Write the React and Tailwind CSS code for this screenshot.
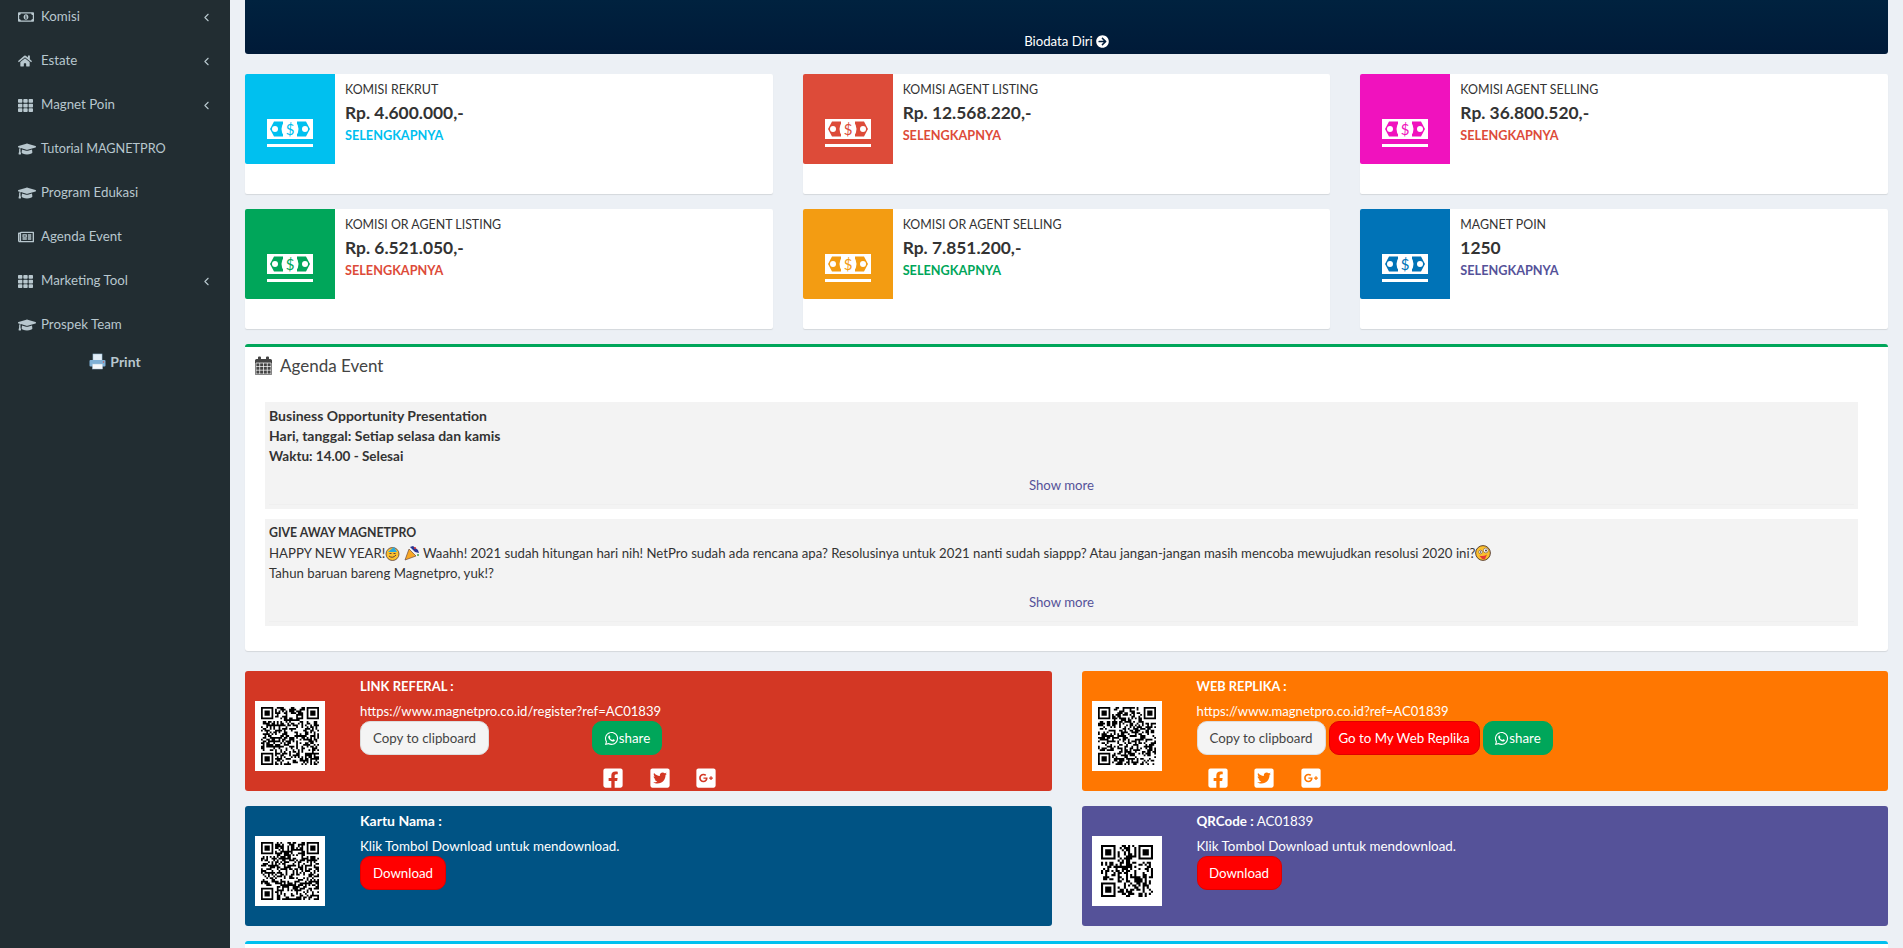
import React from "react";
import { ChevronLeft } from "lucide-react";
import { FaRegMoneyBillAlt, FaHome, FaTh, FaGraduationCap, FaRegNewspaper, FaArrowCircleRight, FaWhatsapp, FaFacebookSquare, FaTwitterSquare, FaGooglePlusSquare } from "react-icons/fa";

function qrPath(n, seed) {
  let s = seed;
  const rnd = () => { s = (s * 1664525 + 1013904223) % 4294967296; return (s >>> 16) & 1; };
  const inFinder = (x, y) => (x < 8 && y < 8) || (x >= n - 8 && y < 8) || (x < 8 && y >= n - 8);
  let d = "";
  const rect = (x, y, w, h) => { d += `M${x} ${y}h${w}v${h}h${-w}z`; };
  for (let y = 0; y < n; y++) for (let x = 0; x < n; x++) { const b = rnd(); if (!inFinder(x, y) && b) rect(x, y, 1, 1); }
  [[0, 0], [n - 7, 0], [0, n - 7]].forEach(([x, y]) => {
    rect(x, y, 7, 1); rect(x, y + 6, 7, 1); rect(x, y + 1, 1, 5); rect(x + 6, y + 1, 1, 5); rect(x + 2, y + 2, 3, 3);
  });
  return d;
}

function QR({ n = 33, seed = 7, inner = 58 }) {
  return (
    <div className="flex h-[70px] w-[70px] items-center justify-center bg-white">
      <svg width={inner} height={inner} viewBox={`0 0 ${n} ${n}`}><path d={qrPath(n, seed)} fill="#000" /></svg>
    </div>
  );
}

function Cash({ color }) {
  return (
    <svg width="46" height="28" viewBox="0 0 46 28">
      <rect x="0" y="0" width="46" height="20" fill="#fff" />
      <rect x="0" y="25" width="46" height="3" fill="#fff" />
      <path d="M3 10 L7 2.5 H16 V17.5 H7 Z" fill={color} />
      <path d="M43 10 L39 2.5 H30 V17.5 H39 Z" fill={color} />
      <ellipse cx="23" cy="10" rx="8.5" ry="9.5" fill="#fff" />
      <circle cx="8" cy="10" r="3" fill="#fff" />
      <circle cx="38" cy="10" r="3" fill="#fff" />
      <text x="23" y="15.5" textAnchor="middle" fontSize="15" fontFamily="Lato, sans-serif" fill={color}>$</text>
    </svg>
  );
}

const items = [
  [FaRegMoneyBillAlt, "Komisi", true, 16],
  [FaHome, "Estate", true, 14],
  [FaTh, "Magnet Poin", true, 15],
  [FaGraduationCap, "Tutorial MAGNETPRO", false, 18],
  [FaGraduationCap, "Program Edukasi", false, 18],
  [FaRegNewspaper, "Agenda Event", false, 16],
  [FaTh, "Marketing Tool", true, 15],
  [FaGraduationCap, "Prospek Team", false, 18],
];

const cards = [
  ["#00c0ef", "KOMISI REKRUT", "Rp. 4.600.000,-", "#00c0ef"],
  ["#dd4b39", "KOMISI AGENT LISTING", "Rp. 12.568.220,-", "#dd4b39"],
  ["#f012be", "KOMISI AGENT SELLING", "Rp. 36.800.520,-", "#dd4b39"],
  ["#00a65a", "KOMISI OR AGENT LISTING", "Rp. 6.521.050,-", "#dd4b39"],
  ["#f39c12", "KOMISI OR AGENT SELLING", "Rp. 7.851.200,-", "#00a65a"],
  ["#0073b7", "MAGNET POIN", "1250", "#555299"],
];

function Party() {
  return (
    <svg width="15" height="15" viewBox="0 0 15 15" className="inline-block align-[-3px]">
      <circle cx="7.5" cy="8" r="6.5" fill="#fbc02d" stroke="#5d4037" strokeWidth="0.8" />
      <path d="M3 6 L9 1 L12 6 Z" fill="#29a8e0" />
      <path d="M4 10 Q7.5 13 11 9" fill="none" stroke="#5d4037" />
      <path d="M4.5 7.5h2M8.5 7.5h2" stroke="#5d4037" />
    </svg>
  );
}
function Popper() {
  return (
    <svg width="16" height="16" viewBox="0 0 16 16" className="inline-block align-[-3px]">
      <path d="M1 15 L5 4 L12 11 Z" fill="#f9a825" stroke="#6d4c41" strokeWidth="0.7" />
      <path d="M6 2 L9 1 L14 5 L15 8 L11 7 Z" fill="#283593" />
      <circle cx="11" cy="3" r="1" fill="#e53935" />
      <circle cx="14" cy="10" r="1" fill="#43a047" />
    </svg>
  );
}
function Zany() {
  return (
    <svg width="16" height="16" viewBox="0 0 16 16" className="inline-block align-[-3px]">
      <circle cx="8" cy="8" r="7.4" fill="#fbc02d" stroke="#4e342e" strokeWidth="0.9" />
      <circle cx="5.5" cy="7" r="1.8" fill="#fff" stroke="#4e342e" strokeWidth="0.5" />
      <circle cx="10.8" cy="5.5" r="2.4" fill="#fff" stroke="#4e342e" strokeWidth="0.5" />
      <circle cx="11" cy="5.5" r="0.9" fill="#3e2723" />
      <circle cx="5.5" cy="7" r="0.7" fill="#3e2723" />
      <path d="M4 10.5 Q8 12 12 9.5 L10 14 Q7 15 6 12.5 Z" fill="#e53935" />
    </svg>
  );
}

function CalendarIcon() {
  return (
    <svg width="17" height="19" viewBox="0 0 17 19" className="shrink-0">
      <path fill="#444" d="M1.5 3H3V1.5a1 1 0 0 1 1-1h1a1 1 0 0 1 1 1V3h5V1.5a1 1 0 0 1 1-1h1a1 1 0 0 1 1 1V3h1.5A1.5 1.5 0 0 1 17 4.5v13a1.5 1.5 0 0 1-1.5 1.5h-14A1.5 1.5 0 0 1 0 17.5v-13A1.5 1.5 0 0 1 1.5 3z" />
      <path fill="none" stroke="#fff" strokeWidth="0.7" d="M1 7h15v11H1zM1 10.5h15M1 14.2h15M4.7 7v11M8.5 7v11M12.3 7v11" />
    </svg>
  );
}

function Printer() {
  return (
    <svg width="17" height="17" viewBox="0 0 17 17">
      <rect x="4" y="1" width="9" height="7" fill="#e3eef7" stroke="#9fc2dc" strokeWidth="0.6" />
      <rect x="0.5" y="7" width="16" height="6.5" rx="1" fill="#7fb0d6" />
      <rect x="3.5" y="11" width="10" height="5" fill="#f5f8fb" stroke="#a9c4da" strokeWidth="0.5" />
      <circle cx="14.5" cy="9" r="0.7" fill="#d9534f" />
    </svg>
  );
}

function Btn({ className = "", children }) {
  return <div className={`flex h-[34px] items-center justify-center whitespace-nowrap rounded-[10px] border text-[13.3px] ${className}`}>{children}</div>;
}
function Copy() {
  return <Btn className="w-[129px] border-[#ddd] bg-[#f4f4f4] text-[#444]">Copy to clipboard</Btn>;
}
function Share({ className = "" }) {
  return <Btn className={`w-[70px] border-[#00a65a] bg-[#00a65a] text-white ${className}`}><FaWhatsapp className="text-[15px]" />share</Btn>;
}
function Socials({ className = "" }) {
  return (
    <div className={`mt-[12px] flex gap-[24.5px] text-[22px] text-white ${className}`}>
      <FaFacebookSquare /><FaTwitterSquare /><FaGooglePlusSquare />
    </div>
  );
}

function Promo({ bg, seed, n, inner, children }) {
  return (
    <div className="flex h-[120px] overflow-hidden rounded-[3px] text-white" style={{ background: bg }}>
      <div className="w-[115px] shrink-0 pl-[10px] pt-[30px]"><QR seed={seed} n={n} inner={inner} /></div>
      <div className="min-w-0 flex-1 pt-[5px] text-[13.2px] leading-[20px]">{children}</div>
    </div>
  );
}

function AgendaItem({ children }) {
  return (
    <div className="flex h-[107px] flex-col bg-[#f3f3f3] px-[4px] pt-[4px] text-[13.2px] leading-[20px] text-[#333]">
      <div className="h-[61px] whitespace-nowrap">{children}</div>
      <div className="mt-[8px] text-center text-[#555299]">Show more</div>
      <div className="mt-[9px] border-t border-[#efefef]" />
    </div>
  );
}

export default function App() {
  return (
    <div className="flex h-[948px] overflow-hidden bg-[#ecf0f5] font-['Lato','Liberation_Sans',sans-serif]">
      <aside className="w-[230px] shrink-0 bg-[#222d32] text-[13.3px] text-[#b8c7ce]">
        <nav className="-mt-[5px]">
          {items.map(([Icon, label, chev, size]) => (
            <div key={label} className="flex h-[44px] items-center pl-[18px] pr-[17px]">
              <span className="flex w-[23px] shrink-0 items-center"><Icon style={{ fontSize: size }} /></span>
              <span className={`flex-1 whitespace-nowrap ${label === "Tutorial MAGNETPRO" ? "text-[12.7px]" : ""}`}>{label}</span>
              {chev && <ChevronLeft size={13} strokeWidth={2} />}
            </div>
          ))}
        </nav>
        <div className="mt-[4px] flex items-center justify-center gap-[4px] text-[14px] font-bold">
          <Printer /><span>Print</span>
        </div>
      </aside>

      <main className="min-w-0 flex-1 px-[15px]">
        <div className="flex h-[54px] items-end justify-center rounded-b-[3px] bg-[linear-gradient(#00223f,#001a38)] pb-[3px] text-[13.2px] leading-[20px] text-white">
          <span className="flex items-center gap-[3px]">Biodata Diri <FaArrowCircleRight className="text-[13px]" /></span>
        </div>

        <div className="mt-[20px] grid grid-cols-3 gap-x-[30px] gap-y-[15px]">
          {cards.map(([bg, label, value, link]) => (
            <div key={label} className="flex h-[120px] items-start rounded-[2px] bg-white shadow-[0_1px_1px_rgba(0,0,0,0.1)]">
              <div className="flex h-[90px] w-[90px] shrink-0 items-end justify-center rounded-tl-[2px] rounded-bl-[2px] pb-[17px]" style={{ background: bg }}>
                <Cash color={bg} />
              </div>
              <div className="px-[10px] pb-[5px] pt-[6px] text-[#333]">
                <div className="text-[12.4px] leading-[20px]">{label}</div>
                <div className="text-[17.4px] font-bold leading-[25px]">{value}</div>
                <div className="text-[12.7px] font-bold leading-[20px]" style={{ color: link }}>SELENGKAPNYA</div>
              </div>
            </div>
          ))}
        </div>

        <section className="mt-[15px] h-[307px] rounded-[3px] border-t-[3px] border-[#00a65a] bg-white shadow-[0_1px_1px_rgba(0,0,0,0.1)]">
          <div className="flex h-[37px] items-center gap-[8px] pl-[10px] text-[17px] text-[#444]">
            <CalendarIcon />Agenda Event
          </div>
          <div className="mt-[18px] flex flex-col gap-[10px] pl-[20px] pr-[30px]">
            <AgendaItem>
              <div className="text-[14px] font-bold">Business Opportunity Presentation</div>
              <div className="text-[14px] font-bold">Hari, tanggal: Setiap selasa dan kamis</div>
              <div className="text-[13.5px] font-bold">Waktu: 14.00 - Selesai</div>
            </AgendaItem>
            <AgendaItem>
              <div className="text-[12.3px] font-bold">GIVE AWAY MAGNETPRO</div>
              <div>HAPPY NEW YEAR!<Party /> <Popper /> Waahh! 2021 sudah hitungan hari nih! NetPro sudah ada rencana apa? Resolusinya untuk 2021 nanti sudah siappp? Atau jangan-jangan masih mencoba mewujudkan resolusi 2020 ini?<Zany /></div>
              <div>Tahun baruan bareng Magnetpro, yuk!?</div>
            </AgendaItem>
          </div>
        </section>

        <div className="mt-[20px] grid grid-cols-2 gap-x-[30px] gap-y-[15px]">
          <Promo bg="#d33724" seed={11} n={33}>
            <div className="text-[13px] font-bold">LINK REFERAL :</div>
            <div className="mt-[5px] text-[13.1px]">https://www.magnetpro.co.id/register?ref=AC01839</div>
            <div className="flex">
              <Copy />
              <Share className="ml-[103px]" />
            </div>
            <Socials className="ml-[242px]" />
          </Promo>
          <Promo bg="#ff7701" seed={23} n={33}>
            <div className="text-[12.8px] font-bold">WEB REPLIKA :</div>
            <div className="mt-[5px] text-[13.1px]">https://www.magnetpro.co.id?ref=AC01839</div>
            <div className="flex gap-[3px]">
              <Copy />
              <Btn className="w-[151px] border-[#e00000] bg-[#ff0000] text-white">Go to My Web Replika</Btn>
              <Share />
            </div>
            <Socials className="ml-[10px]" />
          </Promo>
          <Promo bg="#005384" seed={37} n={33}>
            <div className="text-[14px] font-bold">Kartu Nama :</div>
            <div className="mt-[5px] text-[13.4px]">Klik Tombol Download untuk mendownload.</div>
            <Btn className="w-[86px] border-[#e00000] bg-[#ff0000] text-white">Download</Btn>
          </Promo>
          <Promo bg="#555299" seed={51} n={25} inner={52}>
            <div className="text-[13.4px]"><span className="font-bold">QRCode :</span> AC01839</div>
            <div className="mt-[5px] text-[13.4px]">Klik Tombol Download untuk mendownload.</div>
            <Btn className="w-[85px] border-[#e00000] bg-[#ff0000] text-white">Download</Btn>
          </Promo>
        </div>

        <div className="mt-[15px] h-[20px] rounded-t-[3px] border-t-[3px] border-[#00c0ef] bg-white" />
      </main>
    </div>
  );
}
